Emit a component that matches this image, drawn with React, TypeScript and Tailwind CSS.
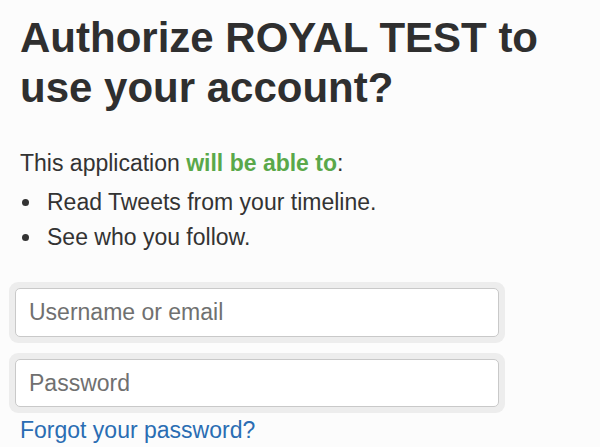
import React from "react";

export default function App() {
  return (
    <div
      className="w-[600px] h-[447px] overflow-hidden bg-[#fcfcfc] text-[#333333]"
      style={{ fontFamily: '"Liberation Sans", Arial, Helvetica, sans-serif' }}
    >
      <div className="pl-[20px] pt-[13px]">
        <h1 className="text-[42px] leading-[50px] font-bold text-[#2f2f2f]">
          Authorize ROYAL TEST to
          <br />
          use your account?
        </h1>
        <p className="mt-[35px] text-[23px] leading-[30px]">
          This application{" "}
          <span className="font-bold text-[#5aa84a]">will be able to</span>:
        </p>
        <ul className="mt-[7px] text-[23px] leading-[35px]">
          <li className="flex items-center">
            <span className="ml-[2px] mr-[18px] inline-block w-[7px] h-[7px] rounded-full bg-[#333333]" />
            Read Tweets from your timeline.
          </li>
          <li className="flex items-center">
            <span className="ml-[2px] mr-[18px] inline-block w-[7px] h-[7px] rounded-full bg-[#333333]" />
            See who you follow.
          </li>
        </ul>
      </div>
      <div className="mt-[27px] ml-[9px] w-[496px] flex flex-col gap-[10px]">
        <div className="p-[6px] rounded-[9px] bg-[#ededed]">
          <input
            type="text"
            placeholder="Username or email"
            className="block w-full h-[49px] px-[13px] rounded-[5px] border border-[#c9c9c9] bg-white text-[23px] placeholder:text-[#707070] outline-none"
          />
        </div>
        <div className="p-[6px] rounded-[9px] bg-[#ededed]">
          <input
            type="password"
            placeholder="Password"
            className="block w-full h-[48px] px-[13px] rounded-[5px] border border-[#c9c9c9] bg-white text-[23px] placeholder:text-[#707070] outline-none"
          />
        </div>
      </div>
      <div className="pl-[20px] mt-[4px]">
        <a href="#" className="text-[23px] leading-[26px] text-[#2a6db3]">
          Forgot your password?
        </a>
      </div>
    </div>
  );
}
